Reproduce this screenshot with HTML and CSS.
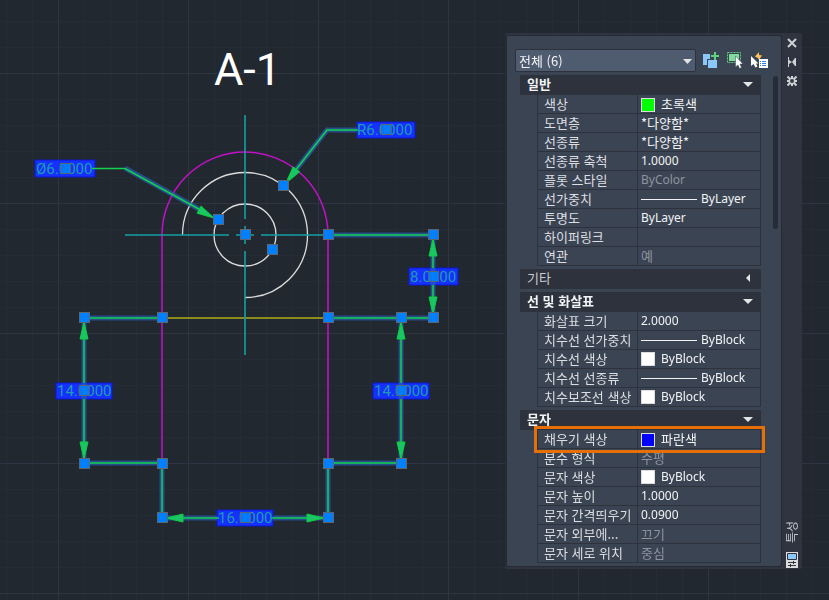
FILE: index.html
```html
<!DOCTYPE html>
<html lang="ko">
<head>
<meta charset="utf-8">
<title>특성</title>
<link rel="stylesheet" href="styles.css">
</head>
<body>
<main class="workspace">
  <svg class="drawing" role="img" aria-label="A-1">
    <defs>
      <pattern id="minor" width="26" height="26" x="6" y="21" patternUnits="userSpaceOnUse">
        <path class="grid-minor" d="M.5 0V26M0 .5H26"/>
      </pattern>
      <pattern id="major" width="130" height="130" x="58" y="73" patternUnits="userSpaceOnUse">
        <path class="grid-major" d="M.5 0V130M0 .5H130"/>
      </pattern>
      <rect id="grip" class="grip" x="-5" y="-5" width="10" height="10"/>
      <path id="tip" class="tip" d="M0 0L-4 17H4Z"/>
    </defs>
    <rect width="100%" height="100%" fill="url(#minor)"/>
    <rect width="100%" height="100%" fill="url(#major)"/>

    <text class="title" x="214" y="85">A-1</text>

    <path class="outline" d="M162 463V235A83 83 0 0 1 328 235V463"/>
    <path class="inner" d="M182.500 235A62.500 62.500 0 1 1 245 297.500"/>
    <circle class="inner" cx="245" cy="235" r="31"/>
    <path class="base" d="M162 318H328"/>
    <path class="axis" d="M245 115V219M245 226V244M245 251V355M125 235H229M236 235H254M261 235H328"/>

    <g class="labels">
      <rect x="35" y="160" width="60" height="17"/>
      <rect x="357" y="122" width="58" height="16"/>
      <rect x="409" y="268" width="49" height="17"/>
      <rect x="373" y="383" width="56" height="16"/>
      <rect x="56" y="383" width="56" height="16"/>
      <rect x="217" y="510" width="56" height="16"/>
    </g>
    <g class="glow">
      <path d="M125 168L206 213M357 130H327L291 176M328 235H433V318H328M401 318V463H328V518H273M217 518H162V463H84V318H162"/>
    </g>
    <g class="dims">
      <path d="M92 168.500H125L206 213M358 130H327L291 176M328 235H433M433 235V268M433 285V318M433 318H328M401 318V383M401 399V463H328V518H271M219 518H162V463H84V399M84 383V318H162"/>
    </g>
    <use href="#tip" transform="translate(214 218) rotate(119)"/>
    <use href="#tip" transform="translate(286 183) rotate(217)"/>
    <use href="#tip" x="433" y="239"/>
    <use href="#tip" transform="translate(433 314) rotate(180)"/>
    <use href="#tip" x="401" y="322"/>
    <use href="#tip" transform="translate(401 459) rotate(180)"/>
    <use href="#tip" x="84" y="322"/>
    <use href="#tip" transform="translate(84 459) rotate(180)"/>
    <use href="#tip" transform="translate(166 518) rotate(-90)"/>
    <use href="#tip" transform="translate(324 518) rotate(90)"/>

    <g class="dim-text">
      <text x="36" y="174">Ø6.0000</text>
      <text x="357" y="135">R6.0000</text>
      <text x="410" y="282">8.0000</text>
      <text x="374" y="396">14.0000</text>
      <text x="57" y="396">14.0000</text>
      <text x="218" y="523">16.0000</text>
    </g>
    <g class="text-grips">
      <use href="#grip" x="65.500" y="168.500"/><use href="#grip" x="386.500" y="129.500"/>
      <use href="#grip" x="433.500" y="276.500"/><use href="#grip" x="401.500" y="390.500"/>
      <use href="#grip" x="84.500" y="390.500"/><use href="#grip" x="245.500" y="517.500"/>
    </g>
    <g>
      <use href="#grip" x="218.500" y="219.500"/><use href="#grip" x="283.500" y="185.500"/>
      <use href="#grip" x="245.500" y="234.500"/><use href="#grip" x="272.500" y="249.500"/>
      <use href="#grip" x="328.500" y="234.500"/><use href="#grip" x="433.500" y="234.500"/>
      <use href="#grip" x="433.500" y="317.500"/><use href="#grip" x="401.500" y="317.500"/>
      <use href="#grip" x="328.500" y="317.500"/><use href="#grip" x="401.500" y="463.500"/>
      <use href="#grip" x="328.500" y="463.500"/><use href="#grip" x="328.500" y="517.500"/>
      <use href="#grip" x="162.500" y="517.500"/><use href="#grip" x="162.500" y="463.500"/>
      <use href="#grip" x="84.500" y="463.500"/><use href="#grip" x="84.500" y="317.500"/>
      <use href="#grip" x="162.500" y="317.500"/>
    </g>
  </svg>

  <aside class="palette">
    <div class="panel">
      <div class="toolbar">
        <div class="picker">
          <select aria-label="선택한 객체"><option>전체 (6)</option></select>
          <svg class="picker-arrow" width="9" height="5"><path d="M0 0H9L4.500 5Z"/></svg>
        </div>
        <button class="tool" type="button" aria-label="추가">
          <svg width="17" height="17"><path fill="#8ac8fc" d="M0 2H7V7H4V13H0ZM5 8H14V16H5Z"/><path stroke="#5fd07e" stroke-width="2" d="M12 0V8M8 4H16"/></svg>
        </button>
        <button class="tool" type="button" aria-label="객체 선택">
          <svg width="17" height="17"><path fill="none" stroke="#5fd07e" stroke-dasharray="2 1" d="M.5 .5H13.500V10.500H.5Z"/><path fill="#7fdc9c" d="M2 2H12V9H2Z"/><path fill="#fff" stroke="#3b4453" stroke-width=".5" d="M8.500 4V15L11 13L12.500 16.500L14.500 15.500L13 12H16Z"/></svg>
        </button>
        <button class="tool" type="button" aria-label="신속 선택">
          <svg width="17" height="17"><path fill="#fff" d="M0 4V14L2.500 12L4.500 15.500L6.500 14.500L5 11.500H7.500Z"/><path fill="#ffc45c" d="M8 0V3L11 3.500L9.500 5.500L8 8L7 6L4 4.500Z"/><path fill="#fff" d="M8 7H17V16H8Z"/><path stroke="#2f86d8" d="M9 9.500H10M11 9.500H15M9 11.500H10M11 11.500H15M9 13.500H10M11 13.500H15"/></svg>
        </button>
      </div>

      <div class="scroller">
        <div class="sections">
          <section class="section">
            <button class="section-head" type="button" aria-expanded="true">일반<svg width="10" height="5"><path d="M0 0H10L5 5Z"/></svg></button>
            <table class="props">
              <tr><th scope="row">색상</th><td><span class="swatch green"></span>초록색</td></tr>
              <tr><th scope="row">도면층</th><td>*다양함*</td></tr>
              <tr><th scope="row">선종류</th><td>*다양함*</td></tr>
              <tr><th scope="row"><label for="ltscale">선종류 축척</label></th><td><input id="ltscale" value="1.0000"></td></tr>
              <tr><th scope="row">플롯 스타일</th><td class="latin muted">ByColor</td></tr>
              <tr><th scope="row">선가중치</th><td class="latin"><span class="line"></span>ByLayer</td></tr>
              <tr><th scope="row"><label for="transp">투명도</label></th><td><input id="transp" value="ByLayer"></td></tr>
              <tr><th scope="row">하이퍼링크</th><td></td></tr>
              <tr><th scope="row">연관</th><td class="muted">예</td></tr>
            </table>
          </section>
          <section class="section">
            <button class="section-head closed" type="button" aria-expanded="false">기타<svg width="10" height="8"><path d="M7 0V8L3 4Z"/></svg></button>
          </section>
          <section class="section">
            <button class="section-head" type="button" aria-expanded="true">선 및 화살표<svg width="10" height="5"><path d="M0 0H10L5 5Z"/></svg></button>
            <table class="props">
              <tr><th scope="row"><label for="arrow">화살표 크기</label></th><td><input id="arrow" value="2.0000"></td></tr>
              <tr><th scope="row">치수선 선가중치</th><td class="latin"><span class="line"></span>ByBlock</td></tr>
              <tr><th scope="row">치수선 색상</th><td class="latin"><span class="swatch"></span>ByBlock</td></tr>
              <tr><th scope="row">치수선 선종류</th><td class="latin"><span class="line"></span>ByBlock</td></tr>
              <tr><th scope="row">치수보조선 색상</th><td class="latin"><span class="swatch"></span>ByBlock</td></tr>
            </table>
          </section>
          <section class="section">
            <button class="section-head" type="button" aria-expanded="true">문자<svg width="10" height="5"><path d="M0 0H10L5 5Z"/></svg></button>
            <table class="props">
              <tr class="callout"><th scope="row">채우기 색상</th><td><span class="swatch blue"></span>파란색</td></tr>
              <tr><th scope="row">분수 형식</th><td class="muted">수평</td></tr>
              <tr><th scope="row">문자 색상</th><td class="latin"><span class="swatch"></span>ByBlock</td></tr>
              <tr><th scope="row"><label for="height">문자 높이</label></th><td><input id="height" value="1.0000"></td></tr>
              <tr><th scope="row"><label for="offset">문자 간격띄우기</label></th><td><input id="offset" value="0.0900"></td></tr>
              <tr><th scope="row">문자 외부에...</th><td class="muted">끄기</td></tr>
              <tr><th scope="row">문자 세로 위치</th><td class="muted">중심</td></tr>
            </table>
          </section>
        </div>
        <div class="scrollbar"></div>
      </div>
    </div>

    <div class="titlebar">
      <button class="bar-button" type="button" aria-label="닫기">
        <svg width="10" height="10"><path stroke="#cfd1d5" stroke-width="2" d="M1 1L9 9M9 1L1 9"/></svg>
      </button>
      <button class="bar-button" type="button" aria-label="자동 숨기기">
        <svg width="10" height="10"><path fill="#cfd1d5" d="M1 0H2V3L5 5L2 7V10H1ZM9 1V9H8L5 5L8 1Z"/></svg>
      </button>
      <button class="bar-button" type="button" aria-label="특성 메뉴">
        <svg width="10" height="10"><path fill="none" stroke="#cfd1d5" stroke-width="1.500" d="M3.500 2.500H6.500L7.500 3.500V6.500L6.500 7.500H3.500L2.500 6.500V3.500Z"/><path stroke="#cfd1d5" stroke-width="2" d="M5 0V2M5 8V10M0 5H2M8 5H10M.5 .5L3 3M7 7L9.500 9.500M9.500 .5L7 3M3 7L.5 9.500"/></svg>
      </button>
      <span class="bar-title">특성</span>
      <svg class="bar-icon" width="12" height="16"><path fill="#dcdcdc" d="M0 0H12V16H0Z"/><path fill="#8ac8fc" stroke="#2e333e" d="M1.500 1.500H10.500V7.500H1.500Z"/><path stroke="#2e333e" d="M2 10.500H10M2 13.500H10M7.500 9V12M4.500 12V15"/></svg>
    </div>
  </aside>
</main>
</body>
</html>
```
FILE: styles.css
```css
* {
  box-sizing: border-box;
}

body {
  margin: 0;
  background: #222830;
  color: #f2f3f5;
  font: 13px/18px "Noto Sans CJK KR", sans-serif;
}

button,
input,
select {
  margin: 0;
  padding: 0;
  border: 0;
  background: none;
  color: inherit;
  font: inherit;
}

svg {
  display: block;
}

.workspace {
  position: relative;
  min-height: 100vh;
  overflow: hidden;
}

/* drawing */
.drawing {
  width: 100%;
  height: 100vh;
}

.grid-minor {
  stroke: #262c37;
}

.grid-major {
  stroke: #2e3441;
}

.title {
  fill: #fff;
  font: 45px Roboto, sans-serif;
}

.outline,
.inner,
.base,
.axis,
.glow,
.dims {
  fill: none;
}

.outline {
  stroke: #c410c8;
  stroke-width: 1.5;
}

.inner {
  stroke: #dcdcdc;
  stroke-width: 1.3;
}

.base {
  stroke: #b0ac14;
  stroke-width: 1.5;
}

.axis {
  stroke: #15a0a2;
  stroke-width: 1.6;
}

.labels {
  fill: #1530ff;
  stroke: #0d18c8;
}

.glow {
  stroke: #2a5cb0;
  stroke-opacity: 0.7;
  stroke-width: 5;
}

.dims {
  stroke: #12d050;
  stroke-width: 1.5;
}

.tip {
  fill: #1cc468;
  stroke: #0cd03a;
}

.dim-text {
  fill: #1c9cae;
  font: 15px Roboto, sans-serif;
}

.grip {
  fill: #007fff;
  stroke: #5c6670;
}

.text-grips {
  opacity: 0.9;
}

/* properties palette */
.palette {
  position: absolute;
  top: 33px;
  right: 27px;
  display: flex;
  width: 297px;
  background: #2f3440;
  border-radius: 2px;
}

.panel {
  flex: 1;
  margin: 2px 0;
  padding: 13px 3px 3px 8px;
  background: #3b4453;
  border: 1px solid #252a33;
  border-left-width: 2px;
  border-radius: 3px;
}

.toolbar {
  display: flex;
  align-items: center;
  gap: 7px;
  height: 23px;
}

.picker {
  position: relative;
  width: 181px;
}

.picker select {
  display: block;
  width: 100%;
  height: 23px;
  padding-left: 3px;
  appearance: none;
  background: #4f5b6f;
  border: 1px solid #2c323d;
  border-radius: 2px;
}

.picker-arrow {
  position: absolute;
  top: 10px;
  right: 4px;
  fill: #e4e5e7;
}

.tool {
  width: 17px;
  height: 17px;
}

.scroller {
  display: flex;
  justify-content: space-between;
  margin: 3px 0 0 5px;
}

.sections {
  display: grid;
  gap: 3px;
  width: 241px;
}

.section-head {
  display: flex;
  align-items: center;
  justify-content: space-between;
  width: 100%;
  height: 20px;
  padding: 0 8px 2px 7px;
  background: #2d323d;
  font-weight: bold;
  text-align: left;
}

.section-head svg {
  fill: #e4e5e7;
}

.closed {
  color: #c8cbd0;
  font-weight: normal;
}

.props {
  width: 224px;
  margin-left: 17px;
  border-collapse: separate;
  border-spacing: 0;
  border-left: 1px solid #2d323d;
  table-layout: fixed;
}

.props th,
.props td {
  height: 19px;
  padding: 0;
  border-right: 1px solid #2d323d;
  border-bottom: 1px solid #2d323d;
  font-weight: normal;
  text-align: left;
  vertical-align: middle;
  white-space: nowrap;
}

.props th {
  width: 100px;
  padding-left: 6px;
  color: #dcdee1;
}

.props td {
  padding-left: 3px;
}

.props input {
  display: block;
  width: 100%;
  height: 18px;
}

.props .latin,
.props input {
  font: 12px/18px "Noto Sans", sans-serif;
}

.props .muted {
  color: #8d949e;
}

.swatch {
  display: inline-block;
  width: 14px;
  height: 14px;
  margin-right: 6px;
  background: #fff;
  border: 1px solid #dcdcdc;
  vertical-align: middle;
}

.latin .swatch {
  vertical-align: -3px;
}

.green {
  background: #0f0;
}

.blue {
  background: #00f;
}

.line {
  display: inline-block;
  width: 56px;
  height: 1px;
  margin-right: 4px;
  background: #f2f3f5;
  vertical-align: middle;
}

.callout {
  outline: 3px solid #e66f08;
  outline-offset: 1px;
}

.scrollbar {
  width: 5px;
  height: 153px;
  margin-top: 1px;
  background: #262b36;
  border-radius: 3px;
}

.titlebar {
  display: flex;
  flex-direction: column;
  align-items: center;
  gap: 9px;
  width: 20px;
  padding: 5px 0 1px;
}

.bar-button {
  width: 10px;
  height: 10px;
}

.bar-title {
  margin-top: auto;
  color: #c8cbd0;
  font-size: 12px;
  line-height: 12px;
  writing-mode: vertical-rl;
  text-orientation: sideways;
  transform: rotate(180deg);
}
```
